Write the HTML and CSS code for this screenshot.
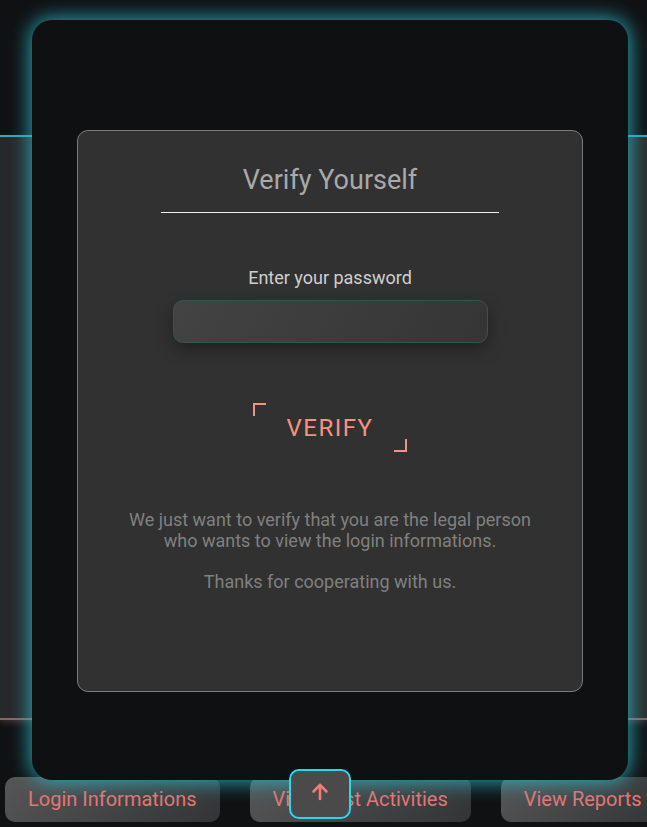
FILE: index.html
```html
<!DOCTYPE html>
<html lang="en">
<head>
<meta charset="utf-8">
<title>Verify Yourself</title>
<link rel="stylesheet" href="styles.css">
</head>
<body>
  <div class="page">
    <div class="panel"></div>
    <nav class="tabs">
      <button class="tab">Login Informations</button>
      <button class="tab">View Past Activities</button>
      <button class="tab">View Reports</button>
    </nav>
  </div>

  <div class="modal">
    <div class="card">
      <h1 class="title">Verify Yourself</h1>
      <hr class="rule">
      <label class="label" for="pw">Enter your password</label>
      <input class="input" id="pw" type="password">
      <button class="verify">VERIFY</button>
      <p class="note">We just want to verify that you are the legal person<br>who wants to view the login informations.<br><br>Thanks for cooperating with us.</p>
    </div>
  </div>

  <button class="to-top" aria-label="Scroll to top">
    <svg width="20" height="20" viewBox="0 0 20 20" fill="none" stroke="#ef7d78" stroke-width="2.6" stroke-linecap="round" stroke-linejoin="round">
      <path d="M10 17V3"/>
      <path d="M3.5 9.5L10 3l6.5 6.5"/>
    </svg>
  </button>
</body>
</html>
```

FILE: styles.css
```css
* { box-sizing: border-box; }

html, body {
  margin: 0;
  height: 827px;
  overflow: hidden;
}

body {
  background: #101113;
  font-family: Roboto, "Liberation Sans", sans-serif;
  position: relative;
}

.page {
  padding-top: 135px;
}

.panel {
  height: 585px;
  background: linear-gradient(90deg, #27282a, #2c2d2f);
  border-top: 2px solid #2ea9b8;
  border-bottom: 2px solid #8a6464;
  box-shadow: 0 3px 6px rgba(130, 90, 90, 0.4);
}

.tabs {
  display: flex;
  gap: 30px;
  margin-top: 57px;
  padding-left: 5px;
}

.tab {
  flex: none;
  height: 45px;
  padding: 0 23px 2px;
  border: none;
  border-radius: 10px;
  background: linear-gradient(135deg, #565656, #333436);
  color: #e47676;
  font-family: Roboto, "Liberation Sans", sans-serif;
  font-size: 20px;
  white-space: nowrap;
}

.modal {
  position: absolute;
  left: 32px;
  top: 20px;
  width: 596px;
  height: 760px;
  padding: 110px 45px 0;
  background: #0f1012;
  border-radius: 20px;
  box-shadow: 0 0 20px 2px rgba(42, 188, 204, 0.85);
  z-index: 2;
}

.card {
  height: 562px;
  background: #313131;
  border: 1px solid #7c7c7c;
  border-radius: 11px;
  display: flex;
  flex-direction: column;
  align-items: center;
  padding-top: 33px;
}

.title {
  margin: 0;
  font-size: 27px;
  font-weight: 400;
  line-height: 32px;
  color: #a9a9a9;
}

.rule {
  width: 338px;
  margin: 16px 0 0;
  border: none;
  border-top: 1px solid #f2f2f2;
}

.label {
  margin-top: 54px;
  font-size: 18px;
  line-height: 22px;
  color: #cfcfcf;
}

.input {
  margin-top: 11px;
  width: 315px;
  height: 43px;
  border: 1px solid #355353;
  border-radius: 10px;
  background: linear-gradient(120deg, #434343, #353535);
  box-shadow: 0 6px 16px rgba(0, 0, 0, 0.35);
  outline: none;
}

.verify {
  position: relative;
  margin-top: 60px;
  width: 154px;
  height: 49px;
  border: none;
  background: transparent;
  color: #f8917f;
  font-family: Roboto, "Liberation Sans", sans-serif;
  font-size: 24px;
  letter-spacing: 1.5px;
  padding: 0;
}

.verify::before,
.verify::after {
  content: "";
  position: absolute;
  width: 11px;
  height: 11px;
}

.verify::before {
  left: 0;
  top: 0;
  border-top: 2px solid #f8917f;
  border-left: 2px solid #f8917f;
}

.verify::after {
  right: 0;
  bottom: 0;
  border-bottom: 2px solid #f8917f;
  border-right: 2px solid #f8917f;
}

.note {
  margin: 58px 0 0;
  font-size: 18px;
  line-height: 20.5px;
  color: #808080;
  text-align: center;
}

.to-top {
  position: absolute;
  left: 289px;
  top: 769px;
  width: 62px;
  height: 50px;
  border: 2px solid #26d9f2;
  border-radius: 10px;
  background: #4b4a4a;
  display: flex;
  align-items: center;
  justify-content: center;
  padding: 0 0 4px;
  z-index: 3;
}
```
